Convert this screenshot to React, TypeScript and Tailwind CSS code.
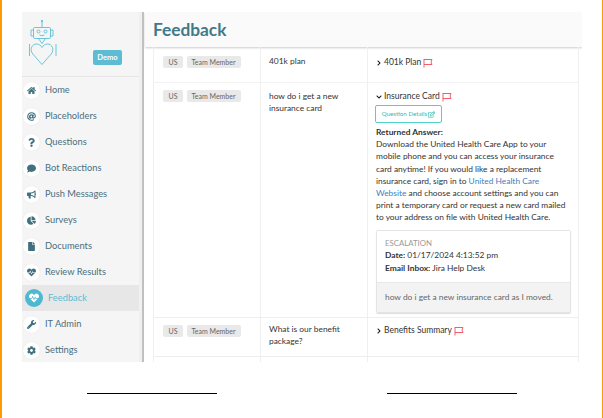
import { FaHome, FaAt, FaQuestion, FaComment, FaBullhorn, FaChartPie, FaFile, FaHeartbeat, FaWrench, FaCog, FaChevronRight, FaChevronDown, FaRegEdit } from "react-icons/fa";

const navItems = [
  { label: "Home", icon: FaHome },
  { label: "Placeholders", icon: FaAt },
  { label: "Questions", icon: FaQuestion },
  { label: "Bot Reactions", icon: FaComment },
  { label: "Push Messages", icon: FaBullhorn },
  { label: "Surveys", icon: FaChartPie },
  { label: "Documents", icon: FaFile },
  { label: "Review Results", icon: FaHeartbeat },
  { label: "Feedback", icon: FaHeartbeat, active: true },
  { label: "IT Admin", icon: FaWrench },
  { label: "Settings", icon: FaCog },
];

function Logo() {
  return (
    <svg width="30" height="46" viewBox="0 0 30 46" fill="none" stroke="#5cc0d6" strokeWidth="0.9">
      <path d="M14 1v6" />
      <circle cx="14" cy="1" r="0.7" fill="#5cc0d6" />
      <rect x="5.500" y="7.500" width="17" height="11" rx="1.200" />
      <path d="M5.500 10H3v6h2.500M22.500 10H25v6h-2.500" />
      <circle cx="10.500" cy="11.500" r="1.500" />
      <circle cx="17.500" cy="11.500" r="1.500" />
      <path d="M11.500 15q2.500 1.500 5 0" />
      <path d="M10.500 18.500l3.500 5 3.500-5" />
      <path d="M14 44.500L4.800 34c-3.500-4.500-1-10 3.700-10 2.700 0 4.500 1.700 5.500 3.500 1-1.800 2.800-3.500 5.500-3.500 4.700 0 7.200 5.500 3.700 10z" />
      <path d="M1.500 24v12M28 24v12" />
    </svg>
  );
}

function Flag() {
  return (
    <svg width="10" height="10" viewBox="0 0 10 10" fill="none" stroke="#ef4d5a" strokeWidth="0.9" className="shrink-0">
      <path d="M1 1v8.500M1 1.500h8L8 4l1 2.500H1" />
    </svg>
  );
}

function Tags() {
  return (
    <div className="flex gap-[3.500px]">
      <span className="h-[12px] w-[20px] rounded-[2px] bg-[#e9e9e9] text-center text-[7px] leading-[12px] text-[#666]">US</span>
      <span className="h-[12px] w-[54px] rounded-[2px] bg-[#e9e9e9] text-center text-[7px] leading-[12px] text-[#666]">Team Member</span>
    </div>
  );
}

function TopicHead({ title, open }: { title: string; open?: boolean }) {
  return (
    <div className="flex h-[13px] items-center text-[8.500px] text-[#333]">
      <span className="flex w-[8px] shrink-0 justify-start text-[#111]">
        {open ? <FaChevronDown size={6} /> : <FaChevronRight size={6} />}
      </span>
      <span className="mr-[2px]">{title}</span>
      <Flag />
    </div>
  );
}

export default function App() {
  return (
    <div className="h-[418px] w-[603px] overflow-hidden border-r border-l-2 border-[#f90] bg-white pt-3 pl-5 font-['Lato','Open_Sans',sans-serif]">
      <div className="flex h-[350px] w-[560px] overflow-hidden">
        {/* sidebar */}
        <aside className="flex h-full w-[117px] shrink-0 flex-col bg-[#f5f5f5]">
          <div className="relative h-[65px] shrink-0 border-b border-[#e6e6e6] pt-2 pl-[6px]">
            <Logo />
            <span className="absolute top-[38px] left-[71px] h-[15px] w-[29px] rounded-[2px] bg-[#5cbcd4] text-center text-[7.500px] leading-[15px] font-bold text-white">Demo</span>
          </div>
          <nav className="flex flex-col">
            {navItems.map((item) => {
              const Icon = item.icon;
              return (
                <div key={item.label} className={`flex h-[26px] items-center ${item.active ? "bg-[#e7e7e7] pl-[3px]" : "pl-[1px]"}`}>
                  {item.active ? (
                    <span className="mr-[5px] flex h-[18px] w-[18px] items-center justify-center rounded-full bg-[#4db8d0] text-white">
                      <Icon size={10} />
                    </span>
                  ) : (
                    <span className="mr-[5px] flex h-[17px] w-[17px] items-center justify-center rounded-full bg-white text-[#41717f] shadow-[0_0_1px_#ddd]">
                      <Icon size={9} />
                    </span>
                  )}
                  <span className={`text-[9.300px] ${item.active ? "text-[#5cbcd4]" : "text-[#4a6f7c]"}`}>{item.label}</span>
                </div>
              );
            })}
          </nav>
        </aside>
        <div className="flex h-full w-[5px] shrink-0 justify-end bg-[#f0f0f0]">
          <div className="h-full w-[2px] bg-[#c0c0c0]" />
        </div>
        {/* main */}
        <main className="flex min-w-0 flex-1 flex-col bg-white pl-[1px]">
          <header className="flex h-[35px] shrink-0 items-center bg-[#fafafa] pl-[8px] shadow-[0_1px_2px_#ccc]">
            <h1 className="text-[17.300px] font-bold text-[#41798a]">Feedback</h1>
          </header>
          <div className="ml-[8px] w-[426px] border-x border-[#f0f0f0]">
            <div className="grid h-[36px] grid-cols-[106px_107px_1fr] border-b border-[#f3f3f3]">
              <div className="pt-[9px] pl-[9px]"><Tags /></div>
              <div className="border-l border-[#f0f0f0] pt-[8px] pl-[8px] text-[8.400px] leading-[12.200px] text-[#333]">401k plan</div>
              <div className="border-l border-[#f0f0f0] pt-[9px] pl-[8px]"><TopicHead title="401k Plan" /></div>
            </div>
            <div className="grid h-[235px] grid-cols-[106px_107px_1fr] border-b border-[#eee]">
              <div className="pt-[7px] pl-[9px]"><Tags /></div>
              <div className="border-l border-[#f0f0f0] pt-[7px] pl-[8px] text-[8.400px] leading-[12.200px] text-[#333]">how do i get a new<br />insurance card</div>
              <div className="border-l border-[#f0f0f0] pt-[7px] pr-[8px] pl-[8px]">
                <TopicHead title="Insurance Card" open />
                <button className="mt-[2px] -ml-px flex h-[18px] w-[67px] items-center justify-center gap-[1px] rounded-[2px] border border-[#4fd0c8] text-[6.200px] text-[#2fbdb4]">
                  Question Details <FaRegEdit size={7} />
                </button>
                <div className="mt-[3px] text-[8.400px] leading-[12.200px] text-[#333]">
                  <p className="font-bold">Returned Answer:</p>
                  <p>
                    Download the United Health Care App to your mobile phone and you can access your insurance card anytime! If you would like a replacement insurance card, sign in to <span className="text-[#3d7fc0]">United Health Care Website</span> and choose account settings and you can print a temporary card or request a new card mailed to your address on file with United Health Care.
                  </p>
                </div>
                <div className="mt-[6px] w-[195px] overflow-hidden rounded-[2px] border border-[#e4e4e4] shadow-[0_1px_1px_#ddd]">
                  <div className="h-[51px] bg-white pt-[6px] pl-[8px] text-[8.400px] leading-[12.500px] text-[#333]">
                    <p className="text-[7.800px] text-[#999]">ESCALATION</p>
                    <p><b>Date:</b> 01/17/2024 4:13:52 pm</p>
                    <p><b>Email Inbox:</b> Jira Help Desk</p>
                  </div>
                  <div className="h-[30px] border-t border-[#e8e8e8] bg-[#f3f3f4] pl-[8px] text-[8.400px] leading-[29px] text-[#666]">how do i get a new insurance card as I moved.</div>
                </div>
              </div>
            </div>
            <div className="grid h-[39px] grid-cols-[106px_107px_1fr] border-b border-[#eee]">
              <div className="pt-[7px] pl-[9px]"><Tags /></div>
              <div className="border-l border-[#f0f0f0] pt-[5px] pl-[8px] text-[8.400px] leading-[12.200px] text-[#333]">What is our benefit<br />package?</div>
              <div className="border-l border-[#f0f0f0] pt-[6px] pl-[8px]"><TopicHead title="Benefits Summary" /></div>
            </div>
            <div className="grid h-[10px] grid-cols-[106px_107px_1fr]">
              <div />
              <div className="border-l border-[#f0f0f0]" />
              <div className="border-l border-[#f0f0f0]" />
            </div>
          </div>
        </main>
      </div>
      {/* signature lines */}
      <div className="mt-[31px] ml-[65px] flex gap-[170px]">
        <div className="h-px w-[130px] bg-black" />
        <div className="h-px w-[130px] bg-black" />
      </div>
    </div>
  );
}
